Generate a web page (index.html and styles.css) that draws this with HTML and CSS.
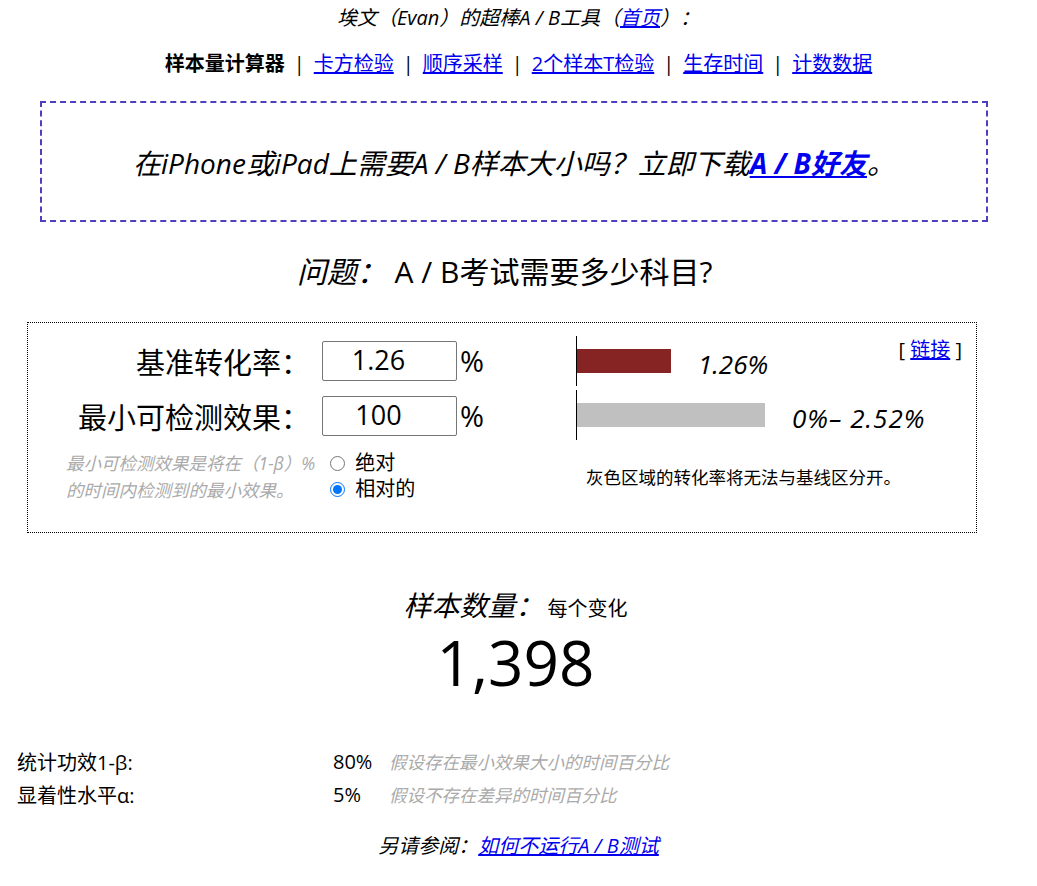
FILE: index.html
```html
<!DOCTYPE html>
<html>
    <head>
        <title>样本量计算器</title>
        <meta charset="utf-8" />
        <link rel="stylesheet" href="styles.css">
    </head>
    <body>
        <div class="title">埃文（Evan）的超棒A / B工具（<a href="#">首页</a>）：</div>

        <div class="nav">
            <b>样本量计算器</b><span class="sep">|</span><a href="#">卡方检验</a><span class="sep">|</span><a href="#">顺序采样</a><span class="sep">|</span><a href="#">2个样本T检验</a><span class="sep">|</span><a href="#">生存时间</a><span class="sep">|</span><a href="#">计数数据</a>
        </div>

        <div class="promo">
            在iPhone或iPad上需要A / B样本大小吗？立即下载<a href="#"><b>A / B好友</b></a>。
        </div>

        <div class="question"><i>问题：</i>&nbsp;A / B考试需要多少科目?</div>

        <div class="calc">
            <div class="inputs">
                <div class="field">
                    <label class="flabel">基准转化率：</label>
                    <input class="num" type="text" value="1.26">
                    <span class="pct">%</span>
                </div>
                <div class="field">
                    <label class="flabel">最小可检测效果：</label>
                    <input class="num" type="text" value="100">
                    <span class="pct">%</span>
                </div>
                <div class="mode">
                    <div class="hint">最小可检测效果是将在（1-β）%<br>的时间内检测到的最小效果。</div>
                    <div class="radios">
                        <label><input type="radio" name="mode"> 绝对</label>
                        <label><input type="radio" name="mode" checked> 相对的</label>
                    </div>
                </div>
            </div>
            <div class="chart">
                <div class="permalink">[&nbsp;<a href="#">链接</a>&nbsp;]</div>
                <div class="bars">
                    <div class="barrow">
                        <div class="bar base" style="width: 94px"></div>
                        <span class="barlabel">1.26%</span>
                    </div>
                    <div class="barrow">
                        <div class="bar range" style="width: 188px"></div>
                        <span class="barlabel wide">0%– 2.52%</span>
                    </div>
                </div>
                <div class="caption">灰色区域的转化率将无法与基线区分开。</div>
            </div>
        </div>

        <div class="result">
            <div class="result-head"><i>样本数量：</i><span class="per">每个变化</span></div>
            <div class="count">1,398</div>
        </div>

        <div class="stats">
            <div class="srow">
                <span class="slabel">统计功效1-β:</span>
                <span class="sval">80%</span>
                <span class="snote">假设存在最小效果大小的时间百分比</span>
            </div>
            <div class="srow">
                <span class="slabel">显着性水平α:</span>
                <span class="sval">5%</span>
                <span class="snote">假设不存在差异的时间百分比</span>
            </div>
        </div>

        <div class="seealso"><i>另请参阅：</i><a href="#"><i>如何不运行A / B测试</i></a></div>
    </body>
</html>
```

FILE: styles.css
```css
body {
    margin: 0;
    font-family: "Open Sans", "Noto Sans CJK SC", sans-serif;
    color: #000;
}
a {
    color: #0000ee;
}

.title {
    text-align: center;
    font-style: italic;
    font-size: 20px;
    line-height: 26px;
    padding-top: 5px;
}

.nav {
    text-align: center;
    font-size: 20px;
    line-height: 26px;
    margin-top: 20px;
}
.nav .sep {
    margin: 0 9px;
}

.promo {
    margin: 24px 49px 0 40px;
    height: 117px;
    border: 2px dashed #4d3fbd;
    display: flex;
    align-items: center;
    justify-content: center;
    font-style: italic;
    font-size: 28px;
}

.question {
    text-align: center;
    font-size: 30px;
    line-height: 38px;
    margin-top: 31px;
    padding-right: 28px;
}

.calc {
    margin: 31px 60px 0 27px;
    border: 1px dotted #000;
    display: flex;
    padding: 10px 14px 30px 0;
    height: 169px;
}

.inputs {
    width: 548px;
}
.field {
    display: flex;
    align-items: center;
    height: 55px;
}
.flabel {
    width: 282px;
    text-align: right;
    font-size: 29px;
    margin-right: 12px;
}
.num {
    width: 135px;
    height: 40px;
    box-sizing: border-box;
    border: 1px solid #767676;
    border-radius: 2px;
    font-family: inherit;
    font-size: 27px;
    text-align: center;
    padding: 0 22px 2px 0;
}
.pct {
    font-size: 29px;
    margin-left: 3px;
}

.mode {
    display: flex;
    margin-top: 7px;
}
.hint {
    margin-left: 38px;
    width: 264px;
    color: #aaa;
    font-style: italic;
    font-size: 17.5px;
    line-height: 27px;
    white-space: nowrap;
}
.radios {
    display: flex;
    flex-direction: column;
    font-size: 20px;
    line-height: 26px;
}
.radios input {
    margin: 0 5px 0 0;
    width: 15px;
    height: 15px;
    vertical-align: -1px;
}

.chart {
    flex: 1;
    position: relative;
    margin-top: 3px;
}
.permalink {
    position: absolute;
    right: 0;
    top: -2px;
    font-size: 20px;
}
.barrow {
    display: flex;
    align-items: center;
    height: 50px;
    border-left: 1px solid #000;
    margin-bottom: 4px;
}
.bar {
    height: 24px;
}
.bar.base {
    background: #862424;
}
.bar.range {
    background: #c0c0c0;
}
.barlabel {
    font-style: italic;
    font-size: 26px;
    margin-left: 27px;
    padding-top: 6px;
}
.barlabel.wide {
    letter-spacing: 1px;
}
.caption {
    font-size: 17.5px;
    margin: 24px 0 0 10px;
}

.result {
    text-align: center;
    margin: 52px 0 0 -6px;
}
.result-head {
    font-size: 28px;
    line-height: 40px;
}
.result-head .per {
    font-size: 20px;
    margin-left: 4px;
}
.count {
    font-size: 62px;
    line-height: 70px;
    margin-top: -2px;
}

.stats {
    margin: 48px 0 0 17px;
    font-size: 20px;
}
.srow {
    display: flex;
    height: 33px;
    align-items: center;
}
.slabel {
    width: 316px;
}
.sval {
    width: 56px;
}
.snote {
    color: #aaa;
    font-style: italic;
    font-size: 17.5px;
}

.seealso {
    text-align: center;
    font-size: 20px;
    margin-top: 19px;
}
```
